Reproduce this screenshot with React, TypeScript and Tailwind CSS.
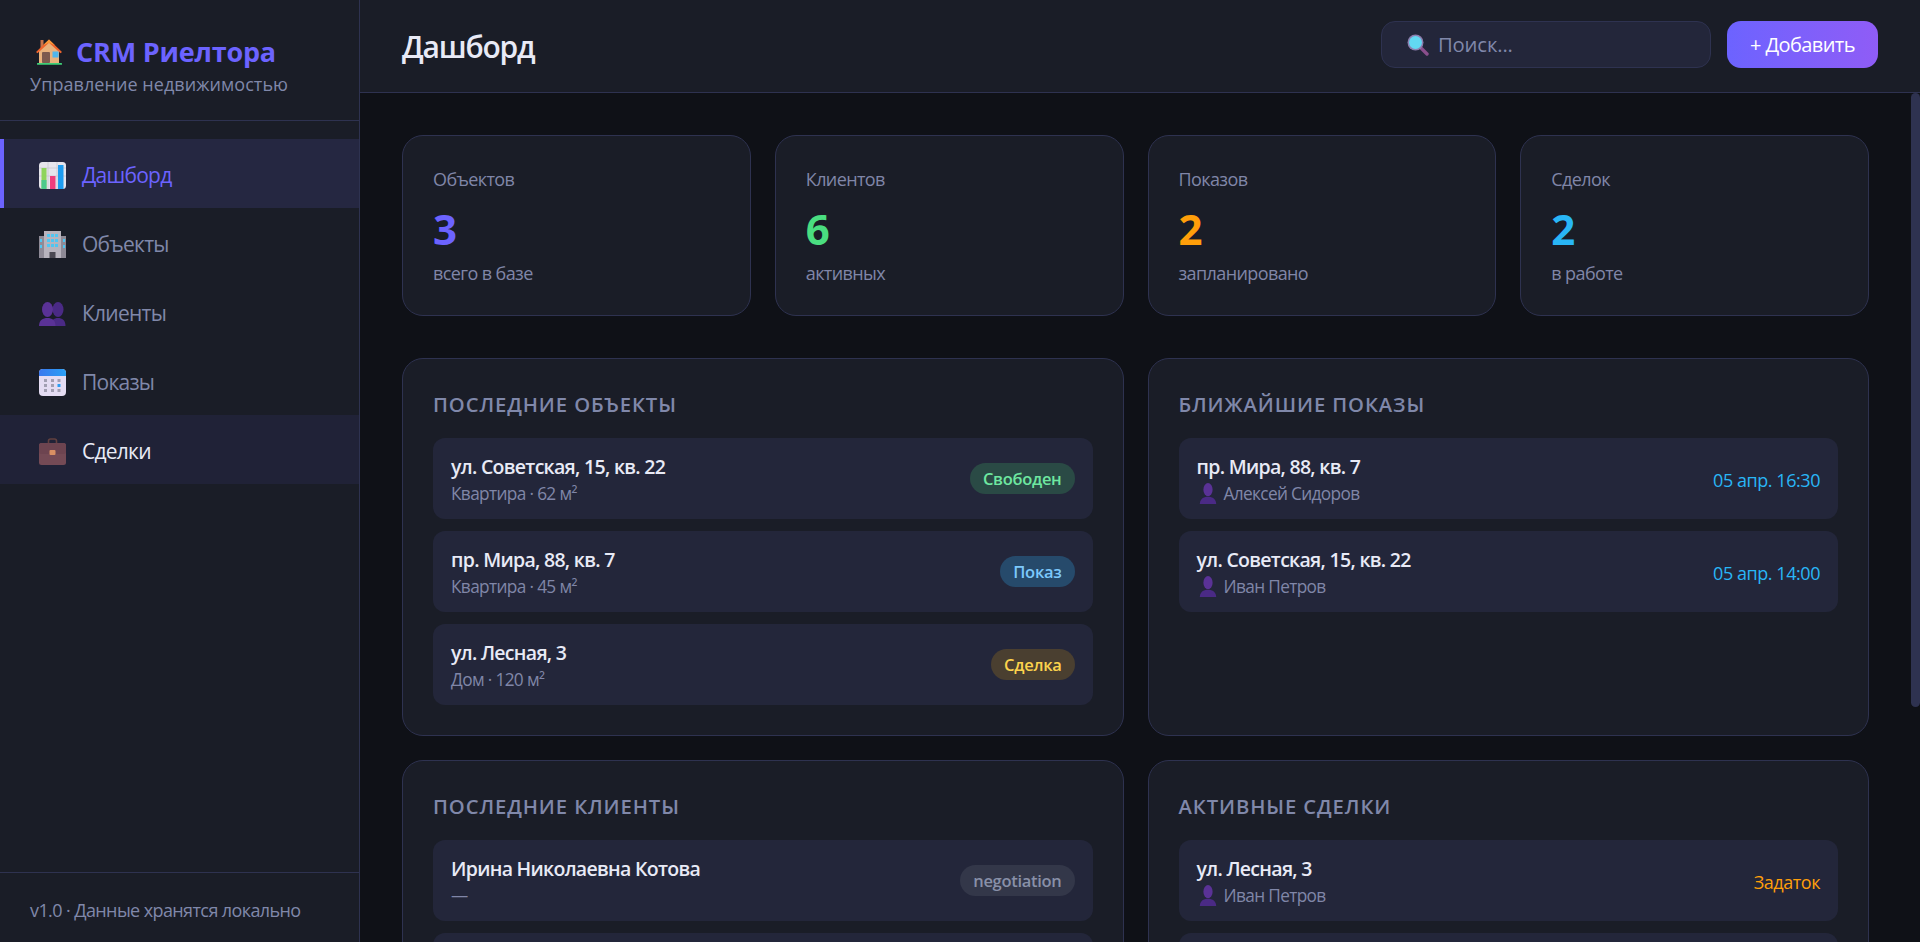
import React from "react";

const House = () => (
  <svg width="28" height="28" viewBox="0 0 28 28" className="shrink-0">
    <rect x="5.5" y="2" width="3" height="8" fill="#c9744a" />
    <path d="M4 12 L14 3.5 L24 12 V25 H4 Z" fill="#e9b27c" />
    <path d="M1 14 L14 1.5 L27 14 L25.5 15.3 L14 4.8 L2.5 15.3 Z" fill="#f0642c" />
    <path d="M14 1.5 L20 7.2 L14 4.8 L8 7.2 Z" fill="#f89a3a" />
    <rect x="7" y="14" width="8" height="11" rx="1" fill="#7d5a4e" />
    <rect x="17.5" y="13.5" width="6" height="6" fill="#4fb6ec" />
    <rect x="2" y="25" width="25" height="1.8" rx=".6" fill="#3fcf78" />
  </svg>
);

const Chart = () => (
  <svg width="27" height="27" viewBox="0 0 27 27" className="shrink-0">
    <rect width="27" height="27" rx="3.5" fill="#e6e4ec" />
    <path d="M9 0 V27 M18 0 V27 M0 6 H27 M0 14 H27" stroke="#c9c7d2" strokeWidth=".8" />
    <rect x="2.5" y="6" width="5" height="21" fill="#8fd45c" />
    <rect x="2.5" y="18" width="5" height="9" fill="#4cc98c" />
    <rect x="11" y="14" width="5.5" height="13" fill="#ef3d7c" />
    <rect x="19" y="3" width="5.5" height="24" fill="#1d9cf0" />
  </svg>
);

const Building = () => (
  <svg width="27" height="27" viewBox="0 0 27 27" className="shrink-0">
    <rect x="0" y="5" width="27" height="22" fill="#8e8a96" />
    <rect x="5" y="0" width="17" height="27" fill="#b7b3bd" />
    <g fill="#4fc6f2">
      <rect x="8" y="3" width="3" height="3" /><rect x="12" y="3" width="3" height="3" /><rect x="16" y="3" width="3" height="3" />
      <rect x="8" y="8" width="3" height="3" /><rect x="12" y="8" width="3" height="3" /><rect x="16" y="8" width="3" height="3" />
      <rect x="8" y="13" width="3" height="3" /><rect x="12" y="13" width="3" height="3" /><rect x="16" y="13" width="3" height="3" />
      <rect x="1" y="8" width="2" height="3" /><rect x="24" y="8" width="2" height="3" />
      <rect x="1" y="14" width="2" height="3" /><rect x="24" y="14" width="2" height="3" />
    </g>
    <rect x="10.5" y="21" width="6" height="6" fill="#4a4852" />
  </svg>
);

const Bust = ({ size = 27 }: { size?: number }) => (
  <svg width={size} height={size} viewBox="0 0 20 20" className="shrink-0">
    <ellipse cx="10" cy="7" rx="4.2" ry="6" fill="#5a3296" />
    <path d="M2.5 20 C3 14.5 7 13.5 10 13.5 C13 13.5 17 14.5 17.5 20 Z" fill="#4a2a85" />
  </svg>
);

const Busts = () => (
  <svg width="27" height="27" viewBox="0 0 27 27" className="shrink-0">
    <ellipse cx="19" cy="9.5" rx="5.5" ry="7.5" fill="#4a2a85" />
    <path d="M12 26 C12 20 15 18 19 18 C23 18 26.5 20 26.5 26 Z" fill="#4a2a85" />
    <ellipse cx="8.5" cy="9.5" rx="5.5" ry="7.5" fill="#5a3296" />
    <path d="M0 26 C0 20 4 18 8.5 18 C13 18 16.5 20 16.5 26 Z" fill="#5a3296" />
  </svg>
);

const Calendar = () => (
  <svg width="27" height="27" viewBox="0 0 27 27" className="shrink-0">
    <defs>
      <linearGradient id="calTop" x1="0" y1="0" x2="1" y2="0">
        <stop offset="0" stopColor="#3a78ee" />
        <stop offset="1" stopColor="#2aa0f5" />
      </linearGradient>
    </defs>
    <rect width="27" height="27" rx="4" fill="#e4dcf2" />
    <path d="M0 7 V4 a4 4 0 0 1 4 -4 H23 a4 4 0 0 1 4 4 V7 Z" fill="url(#calTop)" />
    <g fill="#a29fb2">
      <rect x="5" y="10" width="3" height="3" /><rect x="12" y="10" width="3" height="3" /><rect x="18.5" y="10" width="3" height="3" />
      <rect x="5" y="15" width="3" height="3" /><rect x="12" y="15" width="3" height="3" />
      <rect x="5" y="20" width="3" height="3" /><rect x="12" y="20" width="3" height="3" /><rect x="18.5" y="20" width="3" height="3" />
    </g>
    <rect x="18.5" y="15" width="3" height="3" fill="#2a9df4" />
  </svg>
);

const Briefcase = () => (
  <svg width="27" height="27" viewBox="0 0 27 27" className="shrink-0">
    <path d="M9.5 6 V3 a2 2 0 0 1 2 -2 h4 a2 2 0 0 1 2 2 V6" fill="none" stroke="#62403f" strokeWidth="1.6" />
    <rect y="5" width="27" height="22" rx="2.5" fill="#744a55" />
    <rect y="5" width="27" height="11" rx="2.5" fill="#6d4450" />
    <rect x="10.5" y="12" width="6" height="5" rx="1" fill="#d98f63" />
  </svg>
);

const Loupe = () => (
  <svg width="22" height="22" viewBox="0 0 22 22" className="shrink-0">
    <path d="M13.5 13.5 L20 20" stroke="#8a4f8c" strokeWidth="3.4" strokeLinecap="round" />
    <circle cx="8.5" cy="8.5" r="8" fill="#8d7fb0" />
    <circle cx="8.5" cy="8.5" r="6.5" fill="#62d8f2" />
  </svg>
);

const nav = [
  { label: "Дашборд", icon: <Chart />, cls: "bg-[#252741] text-[#6c63ff] border-l-[4px] border-[#6c63ff] pl-[35px]" },
  { label: "Объекты", icon: <Building />, cls: "text-[#8088aa] pl-[39px]" },
  { label: "Клиенты", icon: <Busts />, cls: "text-[#8088aa] pl-[39px]" },
  { label: "Показы", icon: <Calendar />, cls: "text-[#8088aa] pl-[39px]" },
  { label: "Сделки", icon: <Briefcase />, cls: "bg-[#202237] text-[#e8eaf6] pl-[39px]" },
];

const stats = [
  { label: "Объектов", value: "3", sub: "всего в базе", color: "text-[#6c63ff]" },
  { label: "Клиентов", value: "6", sub: "активных", color: "text-[#4ade80]" },
  { label: "Показов", value: "2", sub: "запланировано", color: "text-[#ff9f0a]" },
  { label: "Сделок", value: "2", sub: "в работе", color: "text-[#29b6f6]" },
];

const Row = ({ title, sub, person, right }: { title: string; sub: string; person?: boolean; right: React.ReactNode }) => (
  <div className="flex h-[81px] items-center justify-between rounded-[12px] bg-[#23263a] px-[18px]">
    <div className="pt-[2px]">
      <div className="text-[19.5px] leading-[26px] font-semibold tracking-[-0.7px] text-[#e8eaf6]">{title}</div>
      <div className="mt-[1px] flex items-center gap-[5px] text-[17.25px] leading-[25px] tracking-[-0.65px] text-[#8086a8]">
        {person && <Bust size={22} />}
        <span>{sub}</span>
      </div>
    </div>
    {right}
  </div>
);

const Badge = ({ text, cls }: { text: string; cls: string }) => (
  <span className={`inline-flex h-[31px] items-center rounded-full px-[13px] pt-[1px] text-[16.5px] font-semibold tracking-[-0.3px] ${cls}`}>{text}</span>
);

const Time = ({ text, cls = "text-[#29b6f6]" }: { text: string; cls?: string }) => (
  <span className={`mt-[4px] text-[18px] tracking-[-0.45px] ${cls}`}>{text}</span>
);

const Panel = ({ title, children }: { title: string; children: React.ReactNode }) => (
  <section className="rounded-[21px] border border-[#2e3250] bg-[#1a1d27] p-[30px]">
    <h2 className="mb-[18px] text-[20.25px] leading-[31px] font-semibold tracking-[0.9px] text-[#8088aa] uppercase">{title}</h2>
    <div className="flex flex-col gap-[12px]">{children}</div>
  </section>
);

export default function App() {
  return (
    <div className="flex h-screen overflow-hidden bg-[#0f1117] font-['Open_Sans',sans-serif]">
      <aside className="flex w-[360px] shrink-0 flex-col border-r border-[#2e3250] bg-[#1a1d27]">
        <div className="h-[121px] shrink-0 border-b border-[#2e3250] px-[30px] pt-[33px]">
          <div className="flex h-[38px] items-center gap-[13px] pl-[5px] text-[27px] font-bold tracking-[-0.2px] text-[#6c63ff]">
            <House />
            <span>CRM Риелтора</span>
          </div>
          <div className="text-[18px] leading-[26px] tracking-[0.06px] text-[#8088aa]">Управление недвижимостью</div>
        </div>
        <nav className="flex-1 pt-[18px]">
          {nav.map((n) => (
            <div key={n.label} className={`flex h-[69px] items-center gap-[16px] pt-[4px] text-[21px] tracking-[-0.75px] ${n.cls}`}>
              {n.icon}
              <span>{n.label}</span>
            </div>
          ))}
        </nav>
        <div className="h-[70px] shrink-0 border-t border-[#2e3250] px-[30px] pt-[24px] text-[18px] leading-[26px] tracking-[-0.6px] text-[#8088aa]">
          v1.0 · Данные хранятся локально
        </div>
      </aside>
      <div className="flex min-w-0 flex-1 flex-col">
        <header className="flex h-[93px] shrink-0 items-center justify-between border-b border-[#2e3250] bg-[#1a1d27] px-[42px]">
          <h1 className="mt-[1px] text-[30px] font-semibold tracking-[-1.2px] text-[#e8eaf6]">Дашборд</h1>
          <div className="mb-[3px] flex items-center gap-[16px]">
            <label className="flex h-[47px] w-[330px] items-center gap-[9px] rounded-[14px] border border-[#2e3250] bg-[#23263a] pl-[25px]">
              <Loupe />
              <input placeholder="Поиск..." className="w-[240px] bg-transparent text-[20.25px] tracking-[-0.15px] text-[#e8eaf6] outline-none placeholder:text-[#8088aa]" />
            </label>
            <button className="h-[47px] w-[151px] rounded-[14px] bg-gradient-to-r from-[#6c63ff] to-[#8f5cf6] text-[20px] font-medium tracking-[-0.6px] text-white">+ Добавить</button>
          </div>
        </header>
        <div className="relative min-h-0 flex-1">
          <main className="h-full overflow-y-auto py-[42px] pr-[51px] pl-[42px]">
            <div className="grid grid-cols-4 gap-[24px]">
              {stats.map((s) => (
                <div key={s.label} className="rounded-[21px] border border-[#2e3250] bg-[#1a1d27] px-[30px] py-[30px]">
                  <div className="text-[18px] leading-[26px] tracking-[-0.6px] text-[#8086a8]">{s.label}</div>
                  <div className={`mt-[11px] text-[42px] leading-[52px] font-bold ${s.color}`}>{s.value}</div>
                  <div className="mt-[6px] text-[18px] leading-[24px] tracking-[-0.6px] text-[#8086a8]">{s.sub}</div>
                </div>
              ))}
            </div>
            <div className="mt-[42px] grid grid-cols-2 gap-[24px]">
              <Panel title="Последние объекты">
                <Row title="ул. Советская, 15, кв. 22" sub="Квартира · 62 м²" right={<Badge text="Свободен" cls="bg-[#2a4a45] text-[#6ee7a0]" />} />
                <Row title="пр. Мира, 88, кв. 7" sub="Квартира · 45 м²" right={<Badge text="Показ" cls="bg-[#264a6b] text-[#7cc8fb]" />} />
                <Row title="ул. Лесная, 3" sub="Дом · 120 м²" right={<Badge text="Сделка" cls="bg-[#4a3f30] text-[#fcd34d]" />} />
              </Panel>
              <Panel title="Ближайшие показы">
                <Row title="пр. Мира, 88, кв. 7" sub="Алексей Сидоров" person right={<Time text="05 апр. 16:30" />} />
                <Row title="ул. Советская, 15, кв. 22" sub="Иван Петров" person right={<Time text="05 апр. 14:00" />} />
              </Panel>
              <Panel title="Последние клиенты">
                <Row title="Ирина Николаевна Котова" sub="—" right={<Badge text="negotiation" cls="bg-[#333749] text-[#8890a8]" />} />
                <Row title="Алексей Сидоров" sub="—" right={<Badge text="active" cls="bg-[#333749] text-[#8890a8]" />} />
                <Row title="Иван Петров" sub="—" right={<Badge text="active" cls="bg-[#333749] text-[#8890a8]" />} />
                <Row title="Мария Кузнецова" sub="—" right={<Badge text="new" cls="bg-[#333749] text-[#8890a8]" />} />
              </Panel>
              <Panel title="Активные сделки">
                <Row title="ул. Лесная, 3" sub="Иван Петров" person right={<Time text="Задаток" cls="text-[#ff9f0a]" />} />
                <Row title="пр. Мира, 88, кв. 7" sub="Алексей Сидоров" person right={<Time text="Договор" cls="text-[#ff9f0a]" />} />
              </Panel>
            </div>
          </main>
          <div className="absolute top-0 right-0 h-[614px] w-[9px] rounded-[5px] bg-[#2e3250]" />
        </div>
      </div>
    </div>
  );
}
